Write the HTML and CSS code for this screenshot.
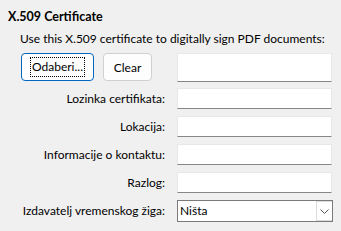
FILE: index.html
```html
<!DOCTYPE html>
<html>
<head>
    <title>X.509 Certificate</title>
    <link rel="stylesheet" href="styles.css">
</head>
<body>
<div class="cert-panel">
  <div class="cert-title">X.509 Certificate</div>
  <div class="cert-intro">Use this X.509 certificate to digitally sign PDF documents:</div>

  <div class="cert-row cert-row-buttons">
    <div class="cert-buttons">
      <button class="btn btn-default"><span class="focus-ring">Odaberi...</span></button>
      <button class="btn btn-clear">Clear</button>
    </div>
    <div class="edit edit-tall"></div>
  </div>

  <div class="cert-row">
    <label class="cert-label">Lozinka certifikata:</label>
    <div class="edit"></div>
  </div>
  <div class="cert-row">
    <label class="cert-label">Lokacija:</label>
    <div class="edit"></div>
  </div>
  <div class="cert-row">
    <label class="cert-label">Informacije o kontaktu:</label>
    <div class="edit"></div>
  </div>
  <div class="cert-row">
    <label class="cert-label">Razlog:</label>
    <div class="edit"></div>
  </div>
  <div class="cert-row cert-row-combo">
    <label class="cert-label">Izdavatelj vremenskog žiga:</label>
    <div class="combo">
      <span class="combo-text">Ništa</span>
      <span class="combo-arrow">
        <svg width="9" height="5" viewBox="0 0 9 5"><polyline points="0.5,0.5 4.5,4.5 8.5,0.5" fill="none" stroke="#555" stroke-width="1"/></svg>
      </span>
    </div>
  </div>
</div>
</body>
</html>
```

FILE: styles.css
```css
html, body {
  margin: 0;
  height: 100%;
  background: #f0f0f0;
  overflow: hidden;
}
body {
  font: normal 12px Lato, "Liberation Sans", sans-serif;
  color: #000;
}

.cert-panel {
  padding: 9px 0 0 8px;
  white-space: nowrap;
}
.cert-title {
  font-weight: bold;
  font-size: 12.5px;
  line-height: 16px;
}
.cert-intro {
  margin: 6px 0 0 12px;
  line-height: 16px;
}

.cert-row {
  display: flex;
  align-items: center;
  height: 21px;
  margin-top: 7px;
}
.cert-row-buttons {
  height: 28px;
  margin-top: 6px;
  align-items: flex-start;
}
.cert-row-combo {
  height: 22px;
}
.cert-label {
  width: 157px;
  flex: none;
  text-align: right;
  margin-right: 12px;
  line-height: 16px;
}
.cert-buttons {
  width: 156px;
  flex: none;
  margin-right: 13px;
  padding-left: 13px;
  box-sizing: border-box;
  display: flex;
  gap: 9px;
}

.btn {
  height: 28px;
  box-sizing: border-box;
  background: #fdfdfd;
  border: 1px solid #d0d0d0;
  border-radius: 4px;
  font: inherit;
  padding: 0;
  color: #000;
}
.btn-default {
  width: 73px;
  border-color: #0067c0;
}
.btn-clear {
  width: 49px;
}
.focus-ring {
  display: inline-block;
  border: 1px dotted #000;
  padding: 1px 1px;
  line-height: 16px;
}

.edit {
  width: 155px;
  flex: none;
  height: 21px;
  box-sizing: border-box;
  background: #fff;
  border: 1px solid #e8e8e8;
  border-bottom: 1px solid #868686;
}
.edit-tall {
  height: 29px;
}

.combo {
  width: 156px;
  flex: none;
  height: 22px;
  box-sizing: border-box;
  background: #fff;
  border: 1px solid #7a7a7a;
  display: flex;
  align-items: center;
  justify-content: space-between;
}
.combo-text {
  padding-left: 2px;
  line-height: 16px;
}
.combo-arrow {
  width: 16px;
  height: 20px;
  box-sizing: border-box;
  border: 1px solid #dcdcdc;
  border-right: 0;
  display: flex;
  align-items: center;
  justify-content: center;
}
```
